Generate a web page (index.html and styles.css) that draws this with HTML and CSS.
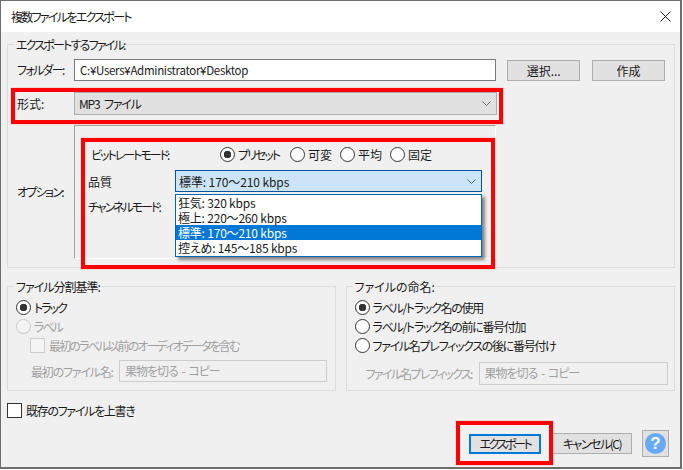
FILE: index.html
```html
<!DOCTYPE html>
<html lang="ja">
<head>
<meta charset="utf-8">
<title>複数ファイルをエクスポート</title>
<link rel="stylesheet" href="styles.css">
</head>
<body>
<div class="window">
  <header class="titlebar">
    <span class="title">複数ファイルをエクスポート</span>
    <svg class="close" width="11" height="11" viewBox="0 0 11 11"><path d="M.5.5l10 10M10.5.5l-10 10" stroke="#111" stroke-width="1" fill="none"/></svg>
  </header>
  <main class="content">
    <section class="group group-export">
      <span class="legend legend-export">エクスポートするファイル:</span>
      <div class="row row-folder">
        <span class="row-label tight">フォルダー:</span>
        <div class="field field-folder">C:¥Users¥Administrator¥Desktop</div>
        <button class="btn btn-pick">選択...</button>
        <button class="btn btn-pick">作成</button>
      </div>
      <div class="row row-format">
        <span class="row-label">形式:</span>
        <div class="combo combo-format"><span class="format-value">MP3 ファイル</span>
          <svg class="chev" width="9" height="5" viewBox="0 0 9 5"><path d="M.5.5l4 4 4-4" stroke="#6d6d6d" fill="none"/></svg>
        </div>
      </div>
      <div class="row row-options">
        <span class="row-label tight">オプション:</span>
        <div class="options">
          <div class="opt-line opt-bitrate">
            <span class="opt-label opt-label-bitrate tighter">ビットレートモード:</span>
            <div class="radio-set">
              <label class="radio on tighter radio-first">プリセット</label>
              <label class="radio">可変</label>
              <label class="radio">平均</label>
              <label class="radio">固定</label>
            </div>
          </div>
          <div class="opt-line opt-quality">
            <span class="opt-label">品質</span>
            <div class="combo combo-quality"><span class="value-text">標準: 170〜210 kbps</span>
              <svg class="chev" width="9" height="5" viewBox="0 0 9 5"><path d="M.5.5l4 4 4-4" stroke="#55606a" fill="none"/></svg>
            </div>
          </div>
          <div class="opt-line opt-channel">
            <span class="opt-label tighter">チャンネルモード:</span>
          </div>
          <ul class="droplist">
            <li>狂気: 320 kbps</li>
            <li>極上: 220〜260 kbps</li>
            <li class="sel">標準: 170〜210 kbps</li>
            <li>控えめ: 145〜185 kbps</li>
          </ul>
        </div>
      </div>
    </section>

    <div class="pair">
      <section class="group group-split">
        <span class="legend legend-split">ファイル分割基準:</span>
        <label class="radio on stack tighter">トラック</label>
        <label class="radio off stack tighter">ラベル</label>
        <label class="check off indent">最初のラベル以前のオーディオデータを含む</label>
        <div class="name-row indent-name">
          <span class="dim dim-first">最初のファイル名:</span>
          <div class="field field-off field-first">果物を切る - コピー</div>
        </div>
      </section>
      <section class="group group-naming">
        <span class="legend">ファイルの命名:</span>
        <label class="radio on stack naming">ラベル/トラック名の使用</label>
        <label class="radio stack naming">ラベル/トラック名の前に番号付加</label>
        <label class="radio stack naming">ファイル名プレフィックスの後に番号付け</label>
        <div class="name-row indent-prefix">
          <span class="dim dim-prefix tight">ファイル名プレフィックス:</span>
          <div class="field field-off field-prefix">果物を切る - コピー</div>
        </div>
      </section>
    </div>

    <label class="check overwrite naming">既存のファイルを上書き</label>

    <footer class="actions">
      <button class="btn btn-primary">エクスポート</button>
      <button class="btn btn-cancel">キャンセル(C)</button>
      <button class="btn btn-help"><span class="help-dot">?</span></button>
    </footer>
  </main>
  <div class="mark mark-format"></div>
  <div class="mark mark-options"></div>
  <div class="mark mark-export"></div>
</div>
</body>
</html>
```
FILE: styles.css
```css
* { box-sizing: border-box; }
html, body { margin: 0; padding: 0; background: #fff; }
body {
  width: 683px;
  height: 470px;
  overflow: hidden;
  font-family: "Noto Sans CJK JP", "Noto Sans", sans-serif;
  font-size: 12px;
  line-height: 15px;
  color: #1a1a1a;
  font-feature-settings: "palt";
}
.tight { letter-spacing: -1.7px; }
.tighter { letter-spacing: -2px; }
.naming { letter-spacing: -1.3px; }
.window {
  position: relative;
  width: 682px;
  height: 469px;
  border: 2px solid #6e6e6e;
  border-width: 1px 2px 2px 1px;
  background: #f0f0f0;
  display: flex;
  flex-direction: column;
}
.titlebar {
  height: 31px;
  flex: none;
  background: #fff;
  display: flex;
  align-items: center;
  justify-content: space-between;
  padding: 0 9px 0 10px;
}
.title { letter-spacing: -1.7px; }
.close { display: block; margin-bottom: 1px; }
.content {
  flex: 1;
  padding: 12px 5px 0 6px;
  display: flex;
  flex-direction: column;
}
.group {
  position: relative;
  border: 1px solid #dcdcdc;
}
.legend {
  position: absolute;
  top: -8px;
  left: 6px;
  padding: 0 2px;
  background: #f0f0f0;
  white-space: nowrap;
}
.legend-export { letter-spacing: -1.8px; }
.legend-split { letter-spacing: -1px; }
.group-export { height: 224px; padding: 14px 9px 0 9px; }
.row { display: flex; align-items: flex-start; }
.row-label { width: 57px; flex: none; }
.row-folder { height: 33px; }
.row-folder .row-label { line-height: 22px; }
.field {
  height: 22px;
  line-height: 20px;
  background: #fff;
  border: 1px solid #7a7a7a;
  padding: 0 5px;
  white-space: nowrap;
}
.field-folder { width: 423px; font-size: 11.5px; letter-spacing: -.3px; }
.btn {
  font: inherit;
  font-feature-settings: inherit;
  color: inherit;
  margin: 0;
  padding: 0;
  background: #e1e1e1;
  border: 1px solid #adadad;
  line-height: 1;
}
.btn-pick { width: 73px; height: 21px; margin-left: 11px; margin-top: 1px; }
.btn-pick + .btn-pick { margin-left: 12px; }
.row-format { height: 33px; }
.row-format .row-label { line-height: 23px; }
.combo {
  display: flex;
  align-items: center;
  justify-content: space-between;
  white-space: nowrap;
}
.combo-format {
  width: 423px;
  height: 23px;
  background: #e1e1e1;
  border: 1px solid #adadad;
  padding: 0 5px 0 4px;
}
.format-value { letter-spacing: -1.2px; word-spacing: 3px; }
.row-options .row-label { line-height: 15px; padding-top: 59px; }
.options {
  position: relative;
  width: 422px;
  height: 134px;
  border: 1px solid #fff;
  border-top-color: #a0a0a0;
  border-left-color: #a0a0a0;
  padding: 17px 0 0 13px;
}
.opt-line { display: flex; align-items: center; }
.opt-bitrate { height: 22px; }
.opt-label { width: 87px; flex: none; white-space: nowrap; }
.opt-label-bitrate { width: 129px; margin-left: 3px; }
.radio-set { display: flex; gap: 8px; }
.radio-first { margin-right: 3px; }
.radio {
  display: flex;
  align-items: center;
  white-space: nowrap;
  gap: 3px;
}
.radio::before {
  content: "";
  flex: none;
  width: 13px;
  height: 13px;
  border-radius: 50%;
  border: 1px solid #333;
  background: #fff;
}
.radio.on::before { background: radial-gradient(circle, #333 0 3.5px, #fff 4px); }
.radio.off { color: #a0a0a0; }
.radio.off::before { border-color: #c8c8c8; background: #f4f4f4; }
.opt-quality { height: 22px; margin-top: 5px; }
.combo-quality {
  width: 307px;
  height: 22px;
  background: #cce4f7;
  border: 1px solid #005499;
  padding: 0 5px 0 3px;
}
.value-text { letter-spacing: -.1px; }
.opt-channel { height: 15px; margin-top: 7px; }
.droplist {
  position: absolute;
  left: 100px;
  top: 68px;
  width: 307px;
  height: 63px;
  margin: 0;
  padding: 0;
  list-style: none;
  background: #fff;
  border: 1px solid #0067b5;
  box-shadow: 3px 3px 3px rgba(0,0,0,.45);
  letter-spacing: -.2px;
}
.droplist li { height: 15px; padding-left: 2px; white-space: nowrap; }
.droplist .sel { background: #0078d7; color: #fff; }
.pair { display: flex; gap: 10px; margin-top: 18px; }
.group-split, .group-naming { height: 105px; padding-top: 11px; }
.group-split { width: 329px; padding-left: 8px; }
.group-naming { width: 330px; padding-left: 8px; }
.stack { height: 19px; }
.check { display: flex; align-items: center; gap: 4px; white-space: nowrap; }
.check::before {
  content: "";
  flex: none;
  width: 13px;
  height: 13px;
  background: #fff;
  border: 1px solid #333;
}
.check.off { color: #a0a0a0; letter-spacing: -1.85px; }
.check.off::before { border-color: #ccc; background: #f4f4f4; }
.indent { margin-left: 14px; height: 19px; }
.name-row { display: flex; align-items: center; }
.dim { color: #a0a0a0; white-space: nowrap; flex: none; }
.dim-first { width: 83px; letter-spacing: -1.2px; }
.dim-prefix { width: 108px; }
.field-off {
  background: #f0f0f0;
  border: 1px solid #ccc;
  color: #a0a0a0;
  line-height: 20px;
  letter-spacing: -1px;
  word-spacing: 2px;
}
.indent-name { margin: 5px 0 0 15px; }
.field-first { width: 208px; margin-left: 5px; }
.indent-prefix { margin: 7px 0 0 0; padding-left: 11px; }
.field-prefix { width: 189px; margin-left: 5px; height: 23px; }
.overwrite { margin-top: 11px; height: 16px; }
.actions {
  display: flex;
  align-items: center;
  justify-content: flex-end;
  margin-top: 12px;
  padding-right: 6px;
}
.btn-primary {
  width: 72px;
  height: 20px;
  border: 2px solid #0078d7;
  letter-spacing: -2.4px;
}
.btn-cancel { width: 80px; height: 21px; margin-left: 11px; letter-spacing: -1.5px; }
.btn-help {
  width: 27px;
  height: 27px;
  margin-left: 10px;
  display: flex;
  align-items: center;
  justify-content: center;
}
.help-dot {
  width: 21px;
  height: 21px;
  border-radius: 50%;
  background: #66a9f5;
  color: #fff;
  font-family: "Liberation Sans", sans-serif;
  font-weight: 700;
  font-size: 17px;
  line-height: 21px;
  text-align: center;
}
.mark {
  position: absolute;
  border: 4px solid #ff0000;
  pointer-events: none;
  box-shadow: 0 0 1px #ff6666;
}
.mark-format { left: 10px; top: 87px; width: 492px; height: 36px; }
.mark-options { left: 80px; top: 137px; width: 414px; height: 131px; }
.mark-export { left: 455px; top: 420px; width: 97px; height: 44px; }
```
